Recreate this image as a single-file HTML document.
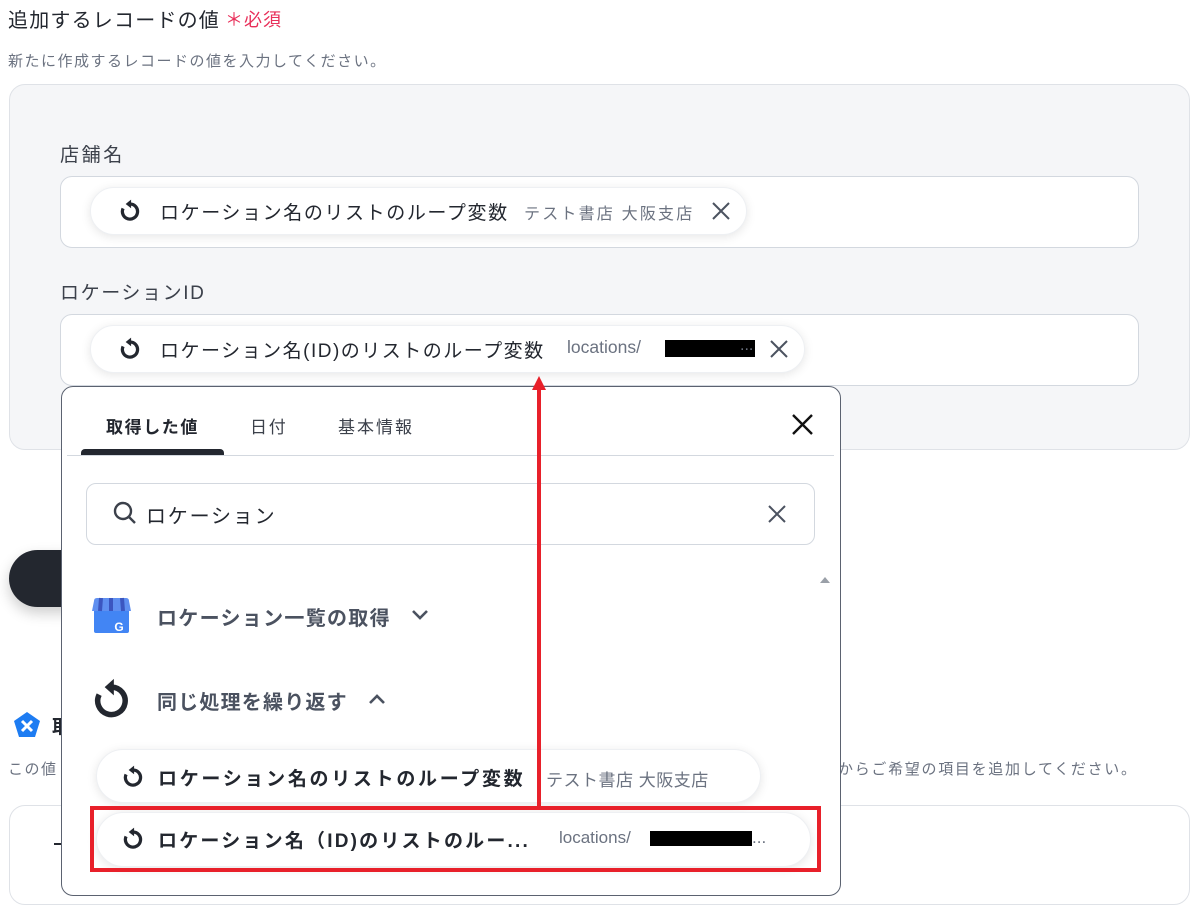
<!DOCTYPE html>
<html><head><meta charset="utf-8"><style>
*{box-sizing:border-box;margin:0;padding:0}
body{width:1197px;height:880px;overflow:hidden;background:#fff;position:relative;font-family:"Liberation Sans","Noto Sans CJK JP",sans-serif;color:#23272f}
.a{position:absolute;white-space:nowrap}
.chip{position:absolute;background:#fff;border-radius:30px;box-shadow:0 2px 10px rgba(0,0,0,.10);border:1px solid #eef0f3}
.gray{color:#6b7280}
</style></head><body>
<div class="a" style="left:8px;top:4px;font-size:20px;letter-spacing:1.2px;color:#23272f">追加するレコードの値</div>
<div class="a" style="left:225px;top:6px;font-size:18px;letter-spacing:1px;color:#e8305a">＊必須</div>
<div class="a gray" style="left:8px;top:50px;font-size:15px;letter-spacing:1.5px">新たに作成するレコードの値を入力してください。</div>

<div class="a" style="left:9px;top:84px;width:1181px;height:366px;background:#f5f6f8;border:1px solid #dfe2e7;border-radius:16px"></div>
<div class="a" style="left:60px;top:140px;font-size:19px;letter-spacing:2.6px;color:#3c414b">店舗名</div>
<div class="a" style="left:60px;top:176px;width:1079px;height:72px;background:#fff;border:1px solid #d3d8df;border-radius:12px"></div>
<div class="chip" style="left:90px;top:187px;width:657px;height:48px"></div>
<svg class="a" style="left:117px;top:198px" width="26" height="26" viewBox="0 0 24 24"><path d="M12 5.5A7 7 0 1 1 5.6 9.6" fill="none" stroke="#23272f" stroke-width="3"/><polygon points="13,1.5 13,9.5 8,5.5" fill="#23272f"/></svg>
<div class="a" style="left:160px;top:198px;font-size:19px;letter-spacing:1.6px">ロケーション名のリストのループ変数</div>
<div class="a gray" style="left:524px;top:200px;font-size:16px;letter-spacing:2.2px">テスト書店 大阪支店</div>
<svg class="a" style="left:711px;top:201px" width="20" height="20" viewBox="0 0 20 20"><path d="M2 2L18 18M18 2L2 18" stroke="#4b5260" stroke-width="2"/></svg>

<div class="a" style="left:60px;top:278px;font-size:19px;letter-spacing:1.6px;color:#3c414b">ロケーションID</div>
<div class="a" style="left:60px;top:314px;width:1079px;height:72px;background:#fff;border:1px solid #d3d8df;border-radius:12px"></div>
<div class="chip" style="left:90px;top:325px;width:715px;height:48px"></div>
<svg class="a" style="left:117px;top:336px" width="26" height="26" viewBox="0 0 24 24"><path d="M12 5.5A7 7 0 1 1 5.6 9.6" fill="none" stroke="#23272f" stroke-width="3"/><polygon points="13,1.5 13,9.5 8,5.5" fill="#23272f"/></svg>
<div class="a" style="left:160px;top:336px;font-size:19px;letter-spacing:1.5px">ロケーション名(ID)のリストのループ変数</div>
<div class="a gray" style="left:567px;top:337px;font-size:17.5px">locations/</div>
<div class="a" style="left:665px;top:340px;width:90px;height:17px;background:#000"></div>
<div class="a gray" style="left:740px;top:337px;font-size:16px">...</div>
<svg class="a" style="left:769px;top:339px" width="20" height="20" viewBox="0 0 20 20"><path d="M2 2L18 18M18 2L2 18" stroke="#4b5260" stroke-width="2"/></svg>

<!-- background items -->
<div class="a" style="left:9px;top:550px;width:120px;height:57px;background:#23272f;border-radius:30px;box-shadow:0 6px 14px rgba(0,0,0,.2)"></div>
<svg class="a" style="left:12px;top:710px" width="30" height="30" viewBox="0 0 30 30"><polygon points="15,2 28,11 23,27 7,27 2,11" fill="#1d7cf2"/><path d="M10 11L20 21M20 11L10 21" stroke="#fff" stroke-width="3"/></svg>
<div class="a" style="left:52px;top:712px;font-size:19px;font-weight:bold">取</div>
<div class="a gray" style="left:8px;top:758px;font-size:15px;letter-spacing:1.5px">この値</div>
<div class="a gray" style="left:838px;top:758px;font-size:15px;letter-spacing:1.7px">からご希望の項目を追加してください。</div>
<div class="a" style="left:9px;top:805px;width:1181px;height:100px;border:1px solid #dfe2e7;border-radius:16px"></div>
<div class="a" style="left:54px;top:843px;width:12px;height:2px;background:#23272f"></div>

<!-- popup -->
<div class="a" style="left:61px;top:386px;width:780px;height:510px;background:#fff;border:1px solid #5b6270;border-radius:12px"></div>
<div class="a" style="left:106px;top:413px;font-size:17px;letter-spacing:1.6px;font-weight:bold">取得した値</div>
<div class="a" style="left:250px;top:413px;font-size:17px;letter-spacing:1.8px;color:#3c414b">日付</div>
<div class="a" style="left:338px;top:413px;font-size:17px;letter-spacing:2px;color:#3c414b">基本情報</div>
<div class="a" style="left:81px;top:449px;width:143px;height:6px;background:#23272f;border-radius:4px 4px 0 0"></div>
<div class="a" style="left:67px;top:455px;width:767px;height:1px;background:#d3d8df"></div>
<svg class="a" style="left:791px;top:413px" width="23" height="23" viewBox="0 0 23 23"><path d="M2 2L21 21M21 2L2 21" stroke="#111" stroke-width="2.4"/></svg>
<div class="a" style="left:86px;top:483px;width:729px;height:62px;border:1px solid #d3d8df;border-radius:10px"></div>
<svg class="a" style="left:112px;top:500px" width="26" height="26" viewBox="0 0 26 26"><circle cx="11" cy="11" r="8" fill="none" stroke="#3c414b" stroke-width="2.4"/><path d="M17 17L23 23" stroke="#3c414b" stroke-width="2.4"/></svg>
<div class="a" style="left:146px;top:500px;font-size:20px;letter-spacing:1.8px">ロケーション</div>
<svg class="a" style="left:768px;top:505px" width="18" height="18" viewBox="0 0 18 18"><path d="M1 1L17 17M17 1L1 17" stroke="#4b5260" stroke-width="2"/></svg>
<svg class="a" style="left:819px;top:575px" width="12" height="10" viewBox="0 0 12 10"><polygon points="6,2 11,8 1,8" fill="#9aa0a8"/></svg>

<svg class="a" style="left:91px;top:597px" width="41" height="37" viewBox="0 0 41 37"><rect x="3" y="12" width="35" height="24" rx="2" fill="#4285f4"/><path d="M3 4Q3 1 6 1H35Q38 1 38 4L40 14H1Z" fill="#5f8ff0"/><path d="M10 1L9 14M20 1V14M31 1L32 14" stroke="#3b56c0" stroke-width="4"/><text x="28" y="34" font-size="12" font-weight="bold" fill="#fff" font-family="Liberation Sans" text-anchor="middle">G</text></svg>
<div class="a" style="left:157px;top:602px;font-size:20px;letter-spacing:1.3px;font-weight:bold;color:#4b5260">ロケーション一覧の取得</div>
<svg class="a" style="left:411px;top:608px" width="18" height="14" viewBox="0 0 18 14"><path d="M2 3L9 10L16 3" fill="none" stroke="#4b5260" stroke-width="2.6"/></svg>
<svg class="a" style="left:90px;top:676px" width="44" height="46" viewBox="0 0 24 24"><path d="M12 5.5A7.5 7.5 0 1 1 5 9.6" fill="none" stroke="#23272f" stroke-width="3"/><polygon points="13,1 13,10 8,5.5" fill="#23272f"/></svg>
<div class="a" style="left:157px;top:686px;font-size:20px;letter-spacing:1.2px;font-weight:bold;color:#4b5260">同じ処理を繰り返す</div>
<svg class="a" style="left:368px;top:692px" width="18" height="14" viewBox="0 0 18 14"><path d="M2 11L9 4L16 11" fill="none" stroke="#4b5260" stroke-width="2.6"/></svg>

<div class="chip" style="left:96px;top:749px;width:665px;height:54px"></div>
<svg class="a" style="left:120px;top:764px" width="26" height="26" viewBox="0 0 24 24"><path d="M12 5.5A7 7 0 1 1 5.6 9.6" fill="none" stroke="#23272f" stroke-width="3"/><polygon points="13,1.5 13,9.5 8,5.5" fill="#23272f"/></svg>
<div class="a" style="left:158px;top:764px;font-size:19px;letter-spacing:2.7px;font-weight:bold">ロケーション名のリストのループ変数</div>
<div class="a gray" style="left:546px;top:766px;font-size:17px;letter-spacing:0.5px">テスト書店 大阪支店</div>

<div class="chip" style="left:96px;top:812px;width:715px;height:55px"></div>
<svg class="a" style="left:120px;top:826px" width="26" height="26" viewBox="0 0 24 24"><path d="M12 5.5A7 7 0 1 1 5.6 9.6" fill="none" stroke="#23272f" stroke-width="3"/><polygon points="13,1.5 13,9.5 8,5.5" fill="#23272f"/></svg>
<div class="a" style="left:158px;top:826px;font-size:19px;letter-spacing:2.2px;font-weight:bold">ロケーション名（ID)のリストのルー...</div>
<div class="a gray" style="left:559px;top:828px;font-size:17px">locations/</div>
<div class="a" style="left:650px;top:831px;width:102px;height:15px;background:#000"></div>
<div class="a gray" style="left:752px;top:828px;font-size:17px">...</div>
<div class="a" style="left:90px;top:806px;width:731px;height:66px;border:4px solid #e8202a"></div>

<div class="a" style="left:537px;top:388px;width:4px;height:420px;background:#e8202a"></div>
<svg class="a" style="left:532px;top:376px" width="14" height="14" viewBox="0 0 14 14"><polygon points="7,0 14,14 0,14" fill="#e8202a"/></svg>
</body></html>
